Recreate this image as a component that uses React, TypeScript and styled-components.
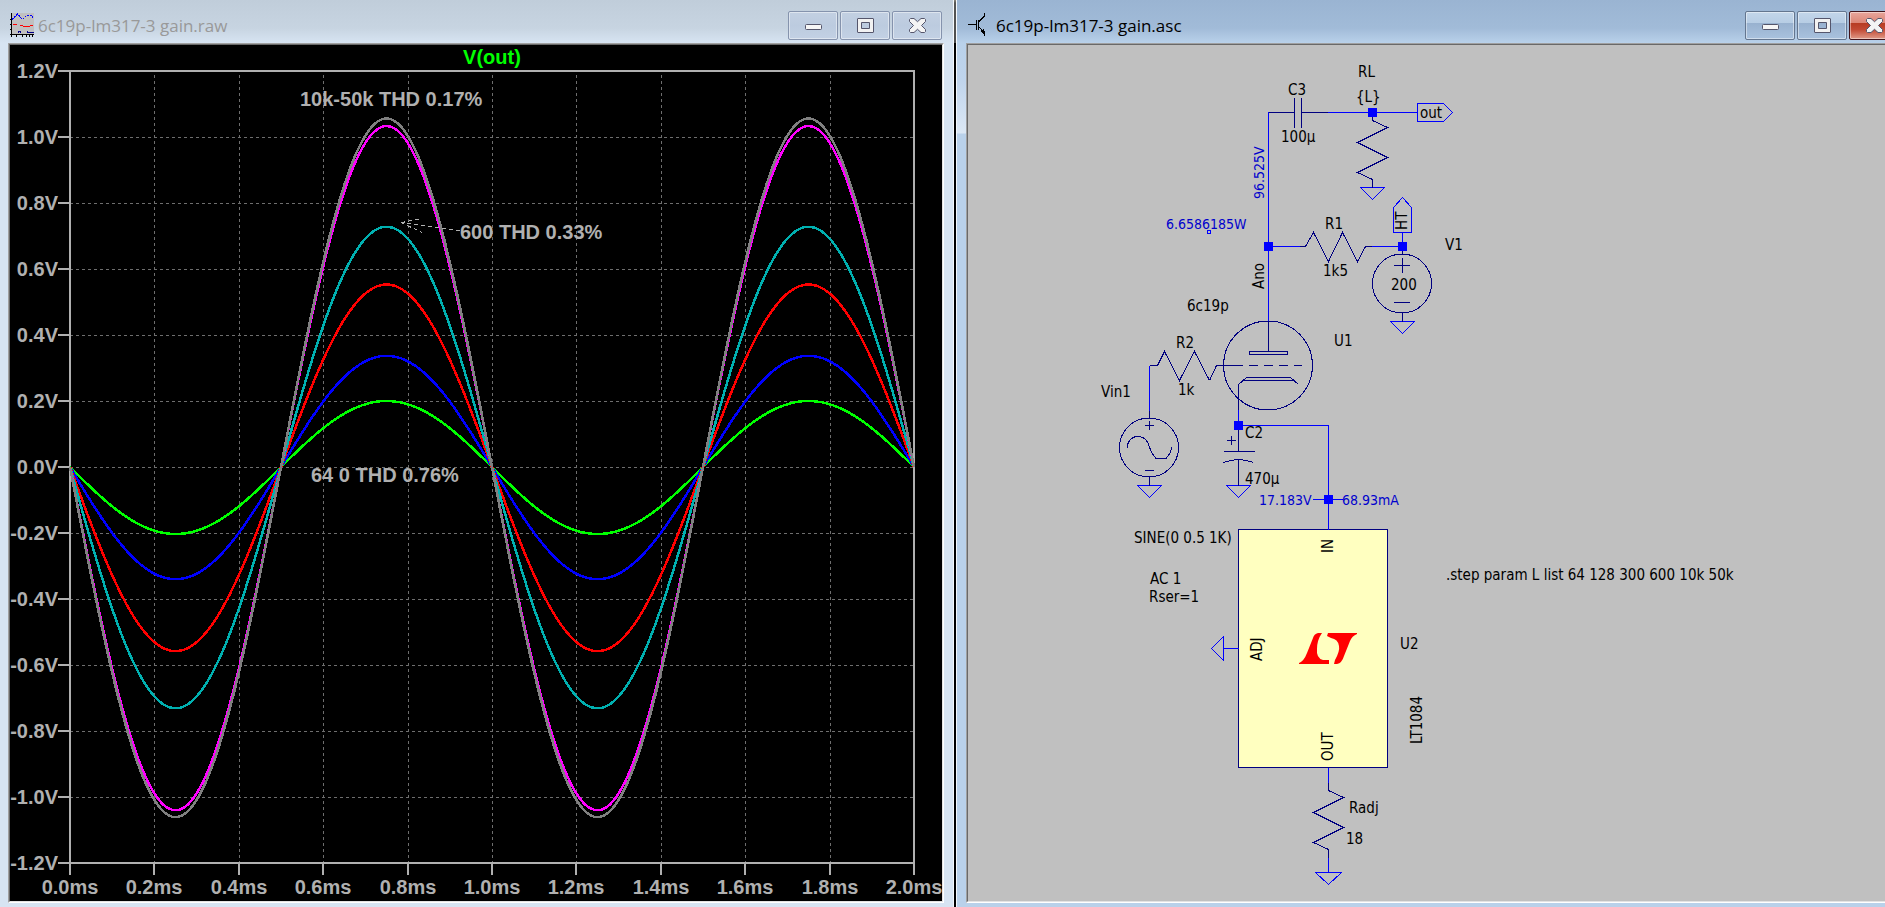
import React from "react";
import styled, { createGlobalStyle } from "styled-components";

const GlobalStyle = createGlobalStyle`
  * { box-sizing: border-box; }
  html, body { margin: 0; height: 100%; overflow: hidden; background: #d7e4f2; }
`;

/* ---------- desktop and windows ---------- */

const Workspace = styled.main`
  display: grid;
  grid-template-columns: 954fr 2px 955fr;
  height: 100vh;
  min-height: 480px;
  margin-right: -26px;
  overflow: hidden;
`;

const Divider = styled.div`
  background: linear-gradient(#8a8578 0, #555 3px, #4c4c4c 43px, #000 43px);
`;

const Window = styled.section<{ $active?: boolean }>`
  display: flex;
  flex-direction: column;
  min-width: 0;
  min-height: 0;
  padding: 0 ${(p) => (p.$active ? 10 : 9)}px 4px ${(p) => (p.$active ? 9 : 8)}px;
  border: 0 solid #f4f8fc;
  border-left-width: ${(p) => (p.$active ? 1 : 0)}px;
  border-right-width: ${(p) => (p.$active ? 0 : 1)}px;
  background: ${(p) =>
    p.$active
      ? `linear-gradient(#9ab4d2 0, #a1bbd8 28px, #b9d1ea 43px, transparent 43px),
         linear-gradient(#b9d1ea 43px, #bfd4ec 80px, #dce8f5 133px, #b9d1ea 134px)`
      : "linear-gradient(#c0cdda 0, #c7d4e1 28px, #d7e4f2 43px)"};
`;

const TitleBar = styled.header`
  display: flex;
  align-items: flex-start;
  height: 43px;
  flex: none;
  padding: 11px 2px 0 2px;
  gap: 4px;
`;

const Title = styled.h1<{ $active?: boolean }>`
  flex: 1;
  margin: 0;
  padding-top: 3px;
  font: 400 17px/24px "Open Sans", "Noto Sans", sans-serif;
  color: ${(p) => (p.$active ? "#000" : "#999")};
  white-space: nowrap;
  padding-left: ${(p) => (p.$active ? 6 : 0)}px;
`;

const TitleIcon = styled.svg`
  flex: none;
  margin-top: 2px;
`;

const Controls = styled.div`
  display: flex;
  gap: 2px;
`;

const blueFace = "linear-gradient(#c3d6ea 0, #b7cde4 40%, #98b1cf 41%, #a9c2de 100%)";
const paleFace = "linear-gradient(#c3d0e2 0, #bccbdf 50%, #c3d1e4 100%)";
const redFace = "linear-gradient(#e8a69c 0, #dc8676 40%, #b63b22 41%, #c24a34 65%, #e09a88 100%)";

const WindowButton = styled.button<{ $tone: "pale" | "blue" | "red" }>`
  display: flex;
  align-items: center;
  justify-content: center;
  width: 50px;
  height: 29px;
  padding: 0;
  border: 1px solid ${(p) => ({ pale: "#8593ad", blue: "#64768f", red: "#43141b" }[p.$tone])};
  border-radius: 2px;
  box-shadow: inset 0 0 0 1px rgba(255, 255, 255, 0.45);
  background: ${(p) => ({ pale: paleFace, blue: blueFace, red: redFace }[p.$tone])};
`;

const Pane = styled.div`
  flex: 1;
  min-height: 0;
  display: flex;
  border: 1px solid;
  border-color: #a0a0a0 #fff #fff #a0a0a0;
`;

const Inner = styled.div<{ $dark?: boolean }>`
  flex: 1;
  min-width: 0;
  display: flex;
  border: 1px solid;
  border-color: #696969 #e3e3e3 #e3e3e3 #696969;
  background: ${(p) => (p.$dark ? "#000" : "#c0c0c0")};
`;

const Drawing = styled.svg`
  display: block;
  width: 100%;
  height: 100%;
  min-width: 0;
`;

const PlotText = styled.text<{ $trace?: boolean }>`
  font: 700 20px "Liberation Sans", Arial, sans-serif;
  fill: ${(p) => (p.$trace ? "#00ff00" : "#b0b0b0")};
`;

const Label = styled.text<{ $value?: boolean }>`
  font: 400 ${(p) => (p.$value ? 14 : 15)}px "DejaVu Sans Condensed", "DejaVu Sans", sans-serif;
  fill: ${(p) => (p.$value ? "#0000cd" : "#000")};
`;

/* ---------- window chrome icons ---------- */

const ink = "#55566c";

const MinimizeIcon = () => (
  <svg width="18" height="9" viewBox="0 0 18 9" aria-hidden="true">
    <rect x="1.5" y="3.5" width="16" height="5" rx="1" fill="#f6f6f6" stroke={ink} />
  </svg>
);

const MaximizeIcon = () => (
  <svg width="18" height="15" viewBox="0 0 18 15" aria-hidden="true">
    <path
      d="M2 .5h15q.5 0 .5.5v13q0 .5-.5.5H2q-.5 0-.5-.5V1Q1.500.5 2 .5ZM5.500 4.500v6h8v-6Z"
      fill="#f2f2f2"
      fillRule="evenodd"
      stroke={ink}
    />
  </svg>
);

const CloseIcon = () => (
  <svg width="18" height="15" viewBox="0 0 18 15" aria-hidden="true">
    <path
      d="M2.500.5H6L9.500 3.700 13 .5h3.500l1 1v2l-4 4 4 4v2l-1 1H13l-3.500-3.200L6 14.500H2.500l-1-1v-2l4-4-4-4v-2Z"
      fill="#f4f4f4"
      stroke={ink}
      strokeLinejoin="round"
    />
  </svg>
);

const WaveformIcon = () => (
  <TitleIcon width="24" height="24" viewBox="0 0 24 24" aria-hidden="true" shapeRendering="crispEdges">
    <rect x="2" width="22" height="21" fill="#c0c0c0" />
    <path
      d="M1.500 0v24M0 21.500h24M0 6.500h2M0 11.500h2M0 16.500h2M6.500 22v2M12.500 22v2M16.500 22v2M19.500 22v2M22.500 22v2"
      stroke="#000"
      fill="none"
    />
    <path d="M2 6.500 7.500 1l5 5.500M12.500 6.500l3-3 2-1.500h3l2 2 1 2.500" stroke="#00f" strokeDasharray="2 1" fill="none" />
    <path d="M3 11.500h4M10 12l4 1.500h5l4-1.500" stroke="#f00" fill="none" />
    <path d="M8.500 20v-1.500h2V20M17 18.500l1 1h6" stroke="#00008b" fill="none" />
  </TitleIcon>
);

const TransistorIcon = () => (
  <TitleIcon width="18" height="24" viewBox="0 0 18 24" aria-hidden="true" shapeRendering="crispEdges">
    <path d="M0 11.500h9M10.500 9l6-6V0M10.500 14l6 5v4" stroke="#000" fill="none" />
    <path d="M8.500 7v10M10.500 7v10" stroke="#000" />
    <path d="m12 18 4-2v5Z" />
  </TitleIcon>
);

const WindowControls = ({ active }: { active?: boolean }) => (
  <Controls>
    <WindowButton $tone={active ? "blue" : "pale"} aria-label="Minimize">
      <MinimizeIcon />
    </WindowButton>
    <WindowButton $tone={active ? "blue" : "pale"} aria-label="Maximize">
      <MaximizeIcon />
    </WindowButton>
    <WindowButton $tone={active ? "red" : "pale"} aria-label="Close">
      <CloseIcon />
    </WindowButton>
  </Controls>
);

/* ---------- waveform plot ---------- */

const LEFT = 70;
const RIGHT = 914;
const TOP = 71;
const BOTTOM = 863;
const ZERO = 467;
const PX_PER_VOLT = 330;

const timeTicks = [70, 154, 239, 323, 408, 492, 576, 661, 745, 830, 914];
const voltTicks = Array.from({ length: 13 }, (_, i) => (12 - 2 * i) / 10);

const traces = [
  { color: "#00ff00", up: 0.2, down: 0.203 },
  { color: "#0000ff", up: 0.337, down: 0.34 },
  { color: "#ff0000", up: 0.553, down: 0.558 },
  { color: "#00b0b0", up: 0.728, down: 0.731 },
  { color: "#ff00ff", up: 1.033, down: 1.04 },
  { color: "#808080", up: 1.056, down: 1.061 },
];

const tracePath = (up: number, down: number) => {
  const points: string[] = [];
  for (let x = LEFT; x <= RIGHT; x += 2) {
    const s = -Math.sin((4 * Math.PI * (x - LEFT)) / (RIGHT - LEFT));
    const v = s * (s > 0 ? up : down);
    points.push(`${x},${(ZERO - v * PX_PER_VOLT).toFixed(1)}`);
  }
  return points.join(" ");
};

const WaveformPlot = () => (
  <Drawing viewBox="10 45 932 856" role="img" aria-label="V(out) over time">
    <g stroke="#6e6e6e" strokeDasharray="3 3" shapeRendering="crispEdges">
      {timeTicks.slice(1, -1).map((x) => (
        <path key={x} d={`M${x}.5 75V${BOTTOM}`} />
      ))}
      {voltTicks.slice(1, -1).map((v) => (
        <path key={v} d={`M${LEFT} ${ZERO - v * PX_PER_VOLT + 0.5}H${RIGHT}`} />
      ))}
    </g>
    <g stroke="#b0b0b0" strokeWidth="2" fill="none" shapeRendering="crispEdges">
      <rect x={LEFT} y={TOP} width={RIGHT - LEFT} height={BOTTOM - TOP} />
      {voltTicks.map((v) => (
        <path key={v} d={`M58 ${ZERO - v * PX_PER_VOLT}H${LEFT}`} />
      ))}
      {timeTicks.map((x) => (
        <path key={x} d={`M${x} ${BOTTOM}V875`} />
      ))}
    </g>
    <g fill="none" strokeWidth="2.5" shapeRendering="crispEdges">
      {traces.map((t) => (
        <polyline key={t.color} points={tracePath(t.up, t.down)} stroke={t.color} />
      ))}
    </g>
    <path
      d="M460 230.500 401 222.500M401 222.500 422 218.500M401 222.500 422 232.500"
      stroke="#b0b0b0"
      strokeDasharray="4 3"
      shapeRendering="crispEdges"
    />
    {voltTicks.map((v) => (
      <PlotText key={v} x="58" y={ZERO - v * PX_PER_VOLT + 7} textAnchor="end">
        {v.toFixed(1)}V
      </PlotText>
    ))}
    {timeTicks.map((x, i) => (
      <PlotText key={x} x={x} y="894" textAnchor="middle">
        {(i / 5).toFixed(1)}ms
      </PlotText>
    ))}
    <PlotText x="492" y="64" textAnchor="middle" $trace>
      V(out)
    </PlotText>
    <PlotText x="300" y="106">10k-50k THD 0.17%</PlotText>
    <PlotText x="460" y="239">600 THD 0.33%</PlotText>
    <PlotText x="311" y="482">64 0 THD 0.76%</PlotText>
  </Drawing>
);

/* ---------- schematic ---------- */

const Ground = ({ x, y }: { x: number; y: number }) => <path d={`M${x - 12} ${y}h24l-12 12Z`} />;

const Node = ({ x, y }: { x: number; y: number }) => (
  <rect x={x - 4.5} y={y - 4.5} width="9" height="9" fill="#0000ff" stroke="none" />
);

type NoteProps = { x: number; y: number; children: string; value?: boolean };

const Note = ({ x, y, children, value }: NoteProps) => (
  <Label x={x} y={y} $value={value}>
    {children}
  </Label>
);

const UprightNote = ({ x, y, children, value }: NoteProps) => (
  <Label transform={`translate(${x} ${y}) rotate(-90)`} $value={value}>
    {children}
  </Label>
);

const Schematic = () => (
  <Drawing viewBox="968 45 931 856" role="img" aria-label="Amplifier schematic">
    <rect x="1238.5" y="529.5" width="149" height="238" fill="#ffffc0" stroke="#000080" shapeRendering="crispEdges" />

    {/* wires, grounds and net flags */}
    <g fill="none" stroke="#0000ff" shapeRendering="crispEdges">
      <path d="M1294 112.500H1268.500V322" />
      <path d="M1328 112.500H1417.500M1417.500 103.500h26l9 9-9 9h-26Z" />
      <path d="M1268.500 246.500H1300M1372 246.500H1402.500V232.500M1393.500 232.500v-25l9-10 9 10v25Z" />
      <path d="M1149.500 411V365.500M1238.500 410V425.500H1328.500V529.500" />
      <path d="M1313 499.500h30M1238.500 648.500h-15M1223.500 636.500v24l-12-12Z" />
      <path d="M1328.500 768v15M1328.500 857v15.500M1315.500 872.500h26l-13 12Z" />
      <Ground x={1372.5} y={187.5} />
      <Ground x={1402.5} y={321.5} />
      <Ground x={1149.5} y={485.5} />
      <Ground x={1238.5} y={485.5} />
      <rect x="1207.5" y="230.5" width="3" height="3" />
      <Node x={1268.5} y={246.5} />
      <Node x={1372.5} y={112.5} />
      <Node x={1402.5} y={246.5} />
      <Node x={1238.5} y={425.5} />
      <Node x={1328.5} y={499.5} />
    </g>

    {/* component symbols */}
    <g fill="none" stroke="#000080" shapeRendering="crispEdges">
      <path d="M1268.500 112.500h26M1294.500 98v30M1301.500 98v30M1301.500 112.500H1328" />
      <path d="M1372.500 117v3.500l15 7-30 15 30 15-30 15 15 7v8" />
      <path d="M1300 246.500h5.500l8-14 15 29 14-29 15 29 8-15H1372" />
      <circle cx="1402" cy="283.5" r="29.5" />
      <path d="M1402.500 251v3M1402.500 313v8.500M1402.500 258v15M1394 265.500h16M1394 302.500h16" />

      <circle cx="1268" cy="365.5" r="44.5" />
      <path d="M1268.500 322v29.500M1249.500 351.500h38v3h-38Z" />
      <path d="M1209.500 380.500l7-15H1243M1249 365.500h9M1264 365.500h9M1279 365.500h9M1294 365.500h8" />
      <path d="M1149.500 365.500h8l7-14 15 29 15-29 15 29" />
      <path d="M1238.500 410V384.500l8-7h44l8 7M1242 380.500h53" />

      <circle cx="1149" cy="447.5" r="29.5" />
      <path d="M1149.500 411v7M1145 425.500h9M1149.500 421v9M1145 470.500h9M1149.500 477v8.500" />
      <path d="M1127.500 447.500v-3q3-8 10.500-8 9 0 11.500 11 2 6 6.500 11h10q5-5 5.500-11" />

      <path d="M1238.500 430v21.500M1223.500 451.500h31M1223.500 462.500q8-3 15-3t15 3M1238.500 459.500v26" />
      <path d="M1227 440.500h9M1231.500 436v9" />
      <path d="M1328.500 783v7.500l15 7-30 15 30 15-30 15 15 7v8" />
    </g>

    {/* LT mark on the regulator */}
    <g fill="#ff0000">
      <path d="M1322 633h-4q-4 1-5 5l-6 15q-3 8-8 10v1h30v-4h-6q-7-2-6-11 0-9 5-16Z" />
      <path d="M1328 633h29v1q-5 2-7 7l-6 15q-2 7-7 8h-3l1-4q5-9 4-14-1-7-8-8l-4-2Z" />
    </g>

    <Note x={1358} y={77}>RL</Note>
    <Note x={1356} y={102}>{"{L}"}</Note>
    <Note x={1288} y={95}>C3</Note>
    <Note x={1281} y={142}>100µ</Note>
    <Note x={1420} y={118}>out</Note>
    <UprightNote x={1264} y={199} value>96.525V</UprightNote>
    <Note x={1166} y={229} value>6.6586185W</Note>
    <Note x={1325} y={229}>R1</Note>
    <Note x={1323} y={276}>1k5</Note>
    <UprightNote x={1407} y={230}>HT</UprightNote>
    <Note x={1445} y={250}>V1</Note>
    <Note x={1391} y={290}>200</Note>
    <UprightNote x={1264} y={289}>Ano</UprightNote>
    <Note x={1187} y={311}>6c19p</Note>
    <Note x={1334} y={346}>U1</Note>
    <Note x={1176} y={348}>R2</Note>
    <Note x={1178} y={395}>1k</Note>
    <Note x={1101} y={397}>Vin1</Note>
    <Note x={1245} y={438}>C2</Note>
    <Note x={1245} y={484}>470µ</Note>
    <Note x={1259} y={505} value>17.183V</Note>
    <Note x={1342} y={505} value>68.93mA</Note>
    <Note x={1134} y={543}>SINE(0 0.5 1K)</Note>
    <Note x={1150} y={584}>AC 1</Note>
    <Note x={1149} y={602}>Rser=1</Note>
    <UprightNote x={1333} y={553}>IN</UprightNote>
    <UprightNote x={1262} y={661}>ADJ</UprightNote>
    <UprightNote x={1333} y={761}>OUT</UprightNote>
    <Note x={1400} y={649}>U2</Note>
    <UprightNote x={1422} y={744}>LT1084</UprightNote>
    <Note x={1349} y={813}>Radj</Note>
    <Note x={1346} y={844}>18</Note>
    <Note x={1446} y={580}>.step param L list 64 128 300 600 10k 50k</Note>
  </Drawing>
);

export default function App() {
  return (
    <>
      <GlobalStyle />
      <Workspace>
        <Window>
          <TitleBar>
            <WaveformIcon />
            <Title>6c19p-lm317-3 gain.raw</Title>
            <WindowControls />
          </TitleBar>
          <Pane>
            <Inner $dark>
              <WaveformPlot />
            </Inner>
          </Pane>
        </Window>
        <Divider />
        <Window $active>
          <TitleBar>
            <TransistorIcon />
            <Title $active>6c19p-lm317-3 gain.asc</Title>
            <WindowControls active />
          </TitleBar>
          <Pane>
            <Inner>
              <Schematic />
            </Inner>
          </Pane>
        </Window>
      </Workspace>
    </>
  );
}
